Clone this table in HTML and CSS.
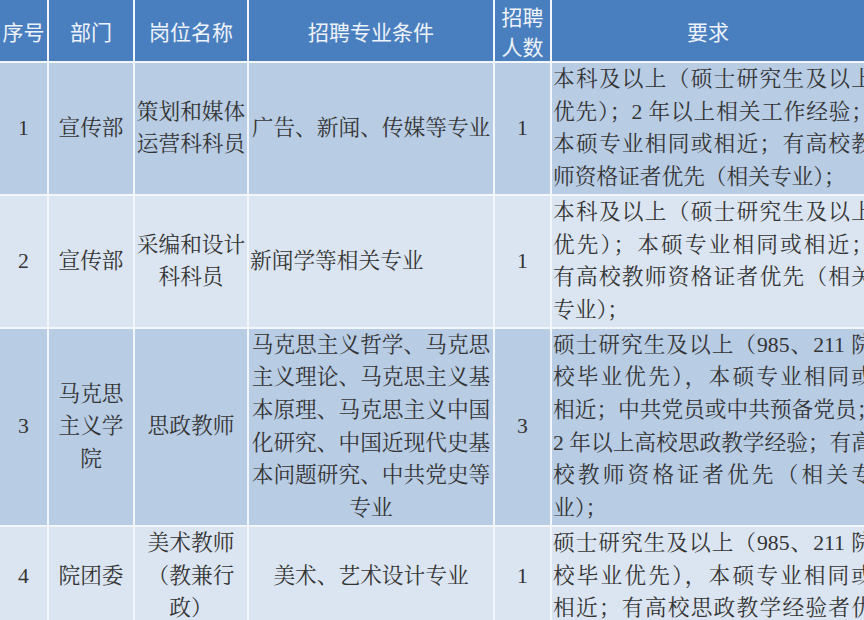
FILE: index.html
```html
<!DOCTYPE html>
<html lang="zh-CN">
<head>
<meta charset="utf-8">
<title>招聘岗位表</title>
<link rel="stylesheet" href="styles.css">
</head>
<body>
<table class="grid">
  <colgroup>
    <col class="c-no">
    <col class="c-dept">
    <col class="c-pos">
    <col class="c-major">
    <col class="c-num">
    <col class="c-req">
  </colgroup>
  <thead>
    <tr>
      <th>序号</th>
      <th>部门</th>
      <th>岗位名称</th>
      <th>招聘专业条件</th>
      <th>招聘<br>人数</th>
      <th>要求</th>
    </tr>
  </thead>
  <tbody>
    <tr class="odd">
      <td>1</td>
      <td>宣传部</td>
      <td>策划和媒体<br>运营科科员</td>
      <td>广告、新闻、传媒等专业</td>
      <td>1</td>
      <td class="req"><div class="txt">
        <span class="l">本科及以上（硕士研究生及以上</span>
        <span class="l">优先）；2 年以上相关工作经验；</span>
        <span class="l">本硕专业相同或相近；有高校教</span>
        <span class="l end">师资格证者优先（相关专业）；</span>
      </div></td>
    </tr>
    <tr class="even">
      <td>2</td>
      <td>宣传部</td>
      <td>采编和设计<br>科科员</td>
      <td class="left">新闻学等相关专业</td>
      <td>1</td>
      <td class="req"><div class="txt">
        <span class="l">本科及以上（硕士研究生及以上</span>
        <span class="l">优先）；本硕专业相同或相近；</span>
        <span class="l">有高校教师资格证者优先（相关</span>
        <span class="l end">专业）；</span>
      </div></td>
    </tr>
    <tr class="odd">
      <td>3</td>
      <td>马克思<br>主义学<br>院</td>
      <td>思政教师</td>
      <td>马克思主义哲学、马克思<br>主义理论、马克思主义基<br>本原理、马克思主义中国<br>化研究、中国近现代史基<br>本问题研究、中共党史等<br>专业</td>
      <td>3</td>
      <td class="req"><div class="txt">
        <span class="l wide">硕士研究生及以上（985、211 院</span>
        <span class="l">校毕业优先），本硕专业相同或</span>
        <span class="l wide">相近；中共党员或中共预备党员；</span>
        <span class="l">2 年以上高校思政教学经验；有高</span>
        <span class="l">校教师资格证者优先（相关专</span>
        <span class="l end">业）；</span>
      </div></td>
    </tr>
    <tr class="even">
      <td>4</td>
      <td>院团委</td>
      <td>美术教师<br>（教兼行<br>政）</td>
      <td>美术、艺术设计专业</td>
      <td>1</td>
      <td class="req"><div class="txt">
        <span class="l wide">硕士研究生及以上（985、211 院</span>
        <span class="l">校毕业优先），本硕专业相同或</span>
        <span class="l">相近；有高校思政教学经验者优</span>
      </div></td>
    </tr>
  </tbody>
</table>
</body>
</html>
```

FILE: styles.css
```css
html, body {
  margin: 0;
  padding: 0;
}

body {
  width: 864px;
  height: 620px;
  overflow: hidden;
  background: #dbe5f1;
  color: #343434;
  font-family: "Liberation Serif", "Noto Serif CJK SC", "Noto Sans CJK SC", serif;
}

.grid {
  width: 864px;
  table-layout: fixed;
  border-collapse: collapse;
  border-style: hidden;
}

.c-no { width: 48px; }
.c-dept { width: 86px; }
.c-pos { width: 114px; }
.c-major { width: 246px; }
.c-num { width: 57px; }
.c-req { width: 313px; }

.grid th,
.grid td {
  border: 2px solid #f2f6fb;
  padding: 0;
  vertical-align: middle;
  text-align: center;
}

.grid th {
  height: 61px;
  background: #4a7fbf;
  color: #eef3fa;
  font-family: "Noto Sans CJK SC", sans-serif;
  font-weight: normal;
  font-size: 21px;
  line-height: 30px;
}

.grid td {
  font-size: 21.7px;
  line-height: 32.7px;
}

.odd td { background: #b8cce4; }
.even td { background: #dbe5f1; }

.grid td.left {
  text-align: left;
  padding-left: 1px;
}

.grid td.req {
  text-align: left;
  padding-left: 1px;
}

.txt {
  width: 320px;
}

.txt .l {
  display: block;
  text-align: justify;
  text-align-last: justify;
}

.txt .l.end {
  text-align-last: left;
}

.txt .l.wide {
  white-space: nowrap;
}
```
